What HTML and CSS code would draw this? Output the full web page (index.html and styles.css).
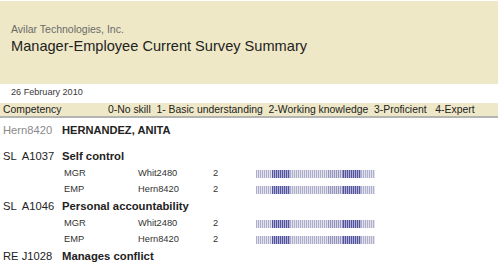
FILE: index.html
```html
<!DOCTYPE html>
<html>
<head>
<meta charset="utf-8">
<link rel="stylesheet" href="styles.css">
</head>
<body>
<div class="header">
  <div class="company">Avilar Technologies, Inc.</div>
  <div class="title">Manager-Employee Current Survey Summary</div>
</div>
<div class="date">26 February 2010</div>
<div class="band">
  <span class="band-label">Competency</span>
  <span class="legend">0-No skill  1- Basic understanding  2-Working knowledge  3-Proficient   4-Expert</span>
</div>
<div class="person">
  <span class="code muted">Hern8420</span>
  <span class="name">HERNANDEZ, ANITA</span>
</div>
<div class="comp">
  <span class="code">SL  A1037</span>
  <span class="comp-name">Self control</span>
</div>
<div class="sub">
  <span class="role">MGR</span><span class="user">Whit2480</span><span class="score">2</span><span class="bar"><i class="s l"></i><i class="s d"></i><i class="s l2"></i><i class="s m"></i><i class="s d"></i><i class="s l3"></i></span>
</div>
<div class="sub">
  <span class="role">EMP</span><span class="user">Hern8420</span><span class="score">2</span><span class="bar"><i class="s l"></i><i class="s d"></i><i class="s l2"></i><i class="s m"></i><i class="s d"></i><i class="s l3"></i></span>
</div>
<div class="comp">
  <span class="code">SL  A1046</span>
  <span class="comp-name">Personal accountability</span>
</div>
<div class="sub">
  <span class="role">MGR</span><span class="user">Whit2480</span><span class="score">2</span><span class="bar"><i class="s l"></i><i class="s d"></i><i class="s l2"></i><i class="s m"></i><i class="s d"></i><i class="s l3"></i></span>
</div>
<div class="sub">
  <span class="role">EMP</span><span class="user">Hern8420</span><span class="score">2</span><span class="bar"><i class="s l"></i><i class="s d"></i><i class="s l2"></i><i class="s m"></i><i class="s d"></i><i class="s l3"></i></span>
</div>
<div class="comp">
  <span class="code">RE J1028</span>
  <span class="comp-name">Manages conflict</span>
</div>
</body>
</html>
```
FILE: styles.css
```css
html, body {
  margin: 0;
  padding: 0;
  background: #ffffff;
}
body {
  width: 500px;
  height: 271px;
  overflow: hidden;
  font-family: "Liberation Sans", Arial, sans-serif;
  color: #222222;
}
.header {
  margin-top: 1px;
  width: 498px;
  height: 83px;
  box-sizing: border-box;
  padding: 22px 0 0 11px;
  background: #eee8c6;
}
.company {
  font-size: 10.5px;
  line-height: 12px;
  color: #6a6a6a;
}
.title {
  margin-top: 3px;
  font-size: 14.6px;
  line-height: 17px;
  color: #222222;
}
.date {
  margin-top: 3px;
  padding-left: 11px;
  font-size: 9.1px;
  line-height: 11px;
  color: #3a3a3a;
}
.band {
  margin-top: 5px;
  width: 498px;
  height: 13px;
  display: flex;
  background: #eee8c8;
  border-bottom: 2px solid #b4b4b0;
  font-size: 10.4px;
  line-height: 13px;
  color: #222222;
}
.band-label {
  width: 105px;
  padding-left: 3px;
  flex: none;
}
.legend {
  white-space: pre;
}
.person, .comp {
  display: flex;
  align-items: center;
  height: 18px;
}
.person {
  margin-top: 2px;
  height: 20px;
  margin-bottom: 7px;
}
.code {
  width: 59px;
  padding-left: 3px;
  flex: none;
  font-size: 11.2px;
  white-space: pre;
}
.muted {
  color: #8a8a8a;
}
.name {
  font-size: 11.1px;
  font-weight: bold;
}
.comp-name {
  font-size: 11.3px;
  font-weight: bold;
}
.sub {
  display: flex;
  align-items: center;
  height: 16px;
  padding-left: 64px;
  font-size: 9.3px;
  color: #333333;
}
.role {
  width: 74px;
  flex: none;
}
.user {
  width: 75px;
  flex: none;
}
.score {
  width: 43px;
  flex: none;
}
.bar {
  display: flex;
  width: 119px;
  height: 8px;
  margin-top: 2px;
}
.s {
  display: block;
  height: 100%;
}
.l, .l2, .l3 {
  background: repeating-linear-gradient(to right, #aeaecb 0 1px, #e2e2ee 1px 2px);
}
.l {
  width: 16px;
}
.d {
  width: 18px;
  background: repeating-linear-gradient(to right, #53539f 0 1px, #b2b2d4 1px 2px);
}
.l2 {
  width: 38px;
}
.m {
  width: 15px;
  background: repeating-linear-gradient(to right, #9494bd 0 1px, #d6d6e7 1px 2px);
}
.l3 {
  width: 14px;
}
```
